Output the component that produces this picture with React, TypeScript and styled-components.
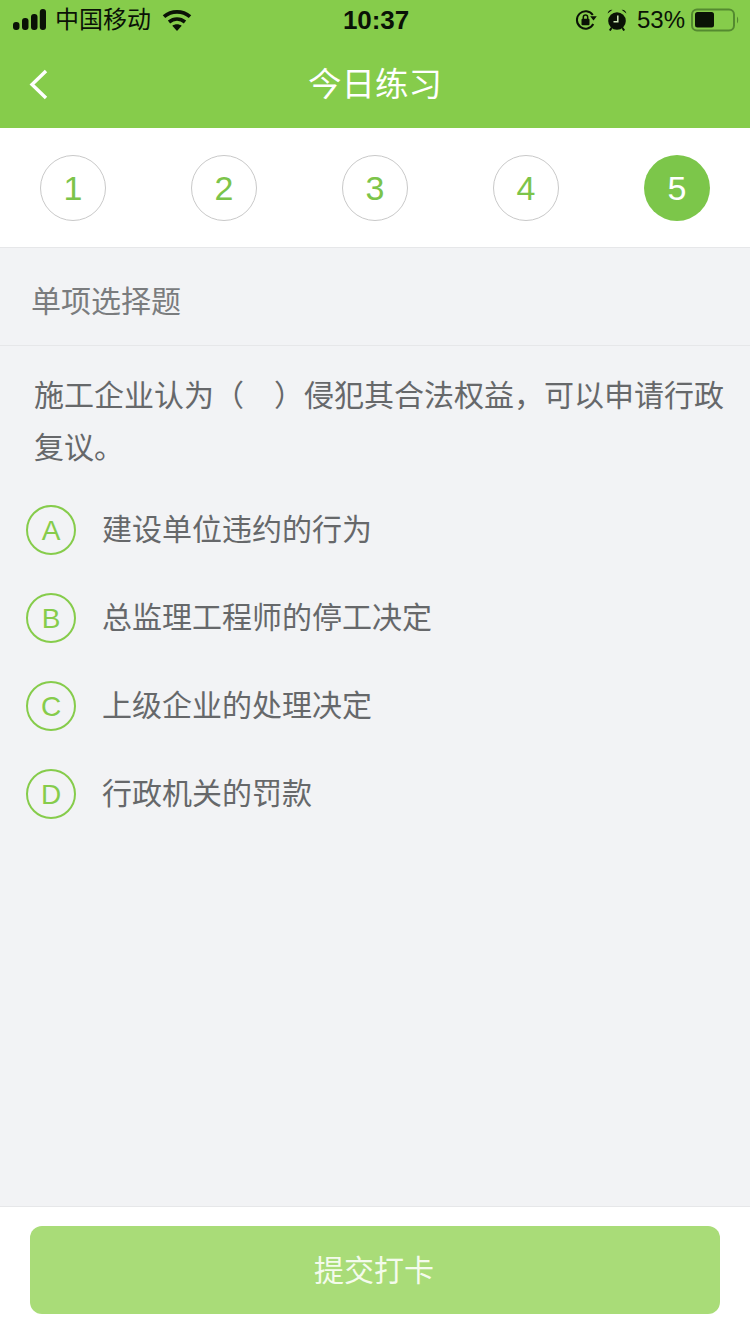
import React from 'react';
import styled, { createGlobalStyle } from 'styled-components';

const Global = createGlobalStyle`
  html, body { margin: 0; padding: 0; background: #f2f3f5; }
  * { box-sizing: border-box; }
`;

const Page = styled.div`
  width: 750px;
  height: 1334px;
  display: flex;
  flex-direction: column;
  overflow: hidden;
  background: #f2f3f5;
  font-family: "Liberation Sans", "Noto Sans CJK SC", sans-serif;
`;
const Header = styled.header`
  background: #86cc4b;
  height: 128px;
  display: flex;
  flex-direction: column;
`;
const StatusBar = styled.div`
  height: 40px;
  display: grid;
  grid-template-columns: 1fr auto 1fr;
  align-items: center;
  padding: 0 11px 0 13px;
  color: #0a1206;
`;
const StatusLeft = styled.div`
  display: flex;
  align-items: center;
  gap: 9px;
  font-size: 24px;
  line-height: 1;
`;
const CarrierName = styled.span`
  margin-right: 2px;
`;
const StatusRight = styled.div`
  display: flex;
  align-items: center;
  justify-content: flex-end;
  font-size: 24px;
`;
const AlarmSlot = styled.span`
  display: flex;
  margin-left: 10px;
`;
const Time = styled.div`
  font-size: 26px;
  font-weight: 700;
  letter-spacing: -0.1px;
`;
const Percent = styled.span`
  margin: 0 6px 0 10px;
`;
const NavBar = styled.div`
  position: relative;
  flex: 1;
  display: flex;
  align-items: center;
  justify-content: center;
`;
const NavTitle = styled.h1`
  margin: 0;
  font-size: 33.5px;
  font-weight: 400;
  color: #fff;
  line-height: 1;
  transform: translateY(1px);
`;
const Back = styled.svg`
  position: absolute;
  left: 28px;
  top: 28px;
`;
const Steps = styled.div`
  background: #fff;
  height: 120px;
  border-bottom: 1px solid #e6e7e9;
  padding: 27px 40px 0;
  display: flex;
  justify-content: space-between;
  align-items: flex-start;
`;
const Step = styled.div<{ $active?: boolean }>`
  width: 66px;
  height: 66px;
  border-radius: 50%;
  display: flex;
  align-items: center;
  justify-content: center;
  font-size: 34px;
  color: ${p => (p.$active ? '#fff' : '#7cc44a')};
  background: ${p => (p.$active ? '#7cc64a' : '#fff')};
  border: ${p => (p.$active ? 'none' : '1px solid #c9c9c9')};
`;
const SectionTitle = styled.div`
  height: 98px;
  border-bottom: 1px solid #e6e7e9;
  padding: 10px 0 0 31px;
  display: flex;
  align-items: center;
  font-size: 30px;
  color: #7a7c7e;
  line-height: 1;
`;
const Body = styled.main`
  flex: 1;
  padding: 24px 26px 0;
  display: flex;
  flex-direction: column;
`;
const Question = styled.p`
  margin: 0 0 12px 8px;
  font-size: 30px;
  line-height: 52px;
  color: #66686a;
  width: 692px;
`;
const Options = styled.ul`
  margin: 0;
  padding: 0;
  list-style: none;
  display: flex;
  flex-direction: column;
`;
const Option = styled.li`
  height: 88px;
  display: flex;
  align-items: center;
  gap: 26px;
`;
const Badge = styled.span`
  width: 50px;
  height: 50px;
  border-radius: 50%;
  border: 2px solid #86cc4b;
  color: #86cc4b;
  display: flex;
  align-items: center;
  justify-content: center;
  font-size: 28px;
  padding-top: 2px;
`;
const OptionText = styled.span`
  font-size: 30px;
  color: #66686a;
  line-height: 1;
`;
const Footer = styled.footer`
  height: 128px;
  background: #fff;
  border-top: 1px solid #e6e7e9;
  padding: 19px 30px 0;
`;
const Submit = styled.button`
  display: block;
  width: 100%;
  height: 88px;
  border: none;
  border-radius: 12px;
  background: #a9dc78;
  color: #f4fbec;
  font-family: inherit;
  font-size: 30px;
  padding: 0 2px 5px 0;
`;

const Signal = () => (
  <svg width="33" height="22" viewBox="0 0 33 22" fill="#0a1206">
    <rect x="0" y="13" width="6.500" height="8" rx="3" />
    <rect x="9" y="9" width="6.500" height="12" rx="3" />
    <rect x="18" y="5" width="6.500" height="16" rx="3" />
    <rect x="26.800" y="0" width="6.200" height="21" rx="3" />
  </svg>
);
const Wifi = () => (
  <svg width="30" height="22" viewBox="0 0 30 22" fill="none">
    <path d="M2 7.600C9.500 1.200 20.500 1.200 28 7.600" stroke="#0a1206" strokeWidth="3.800" />
    <path d="M7 13C11.800 9 18.200 9 23 13" stroke="#0a1206" strokeWidth="3.600" />
    <path d="M10.300 16.800C13 14.800 17 14.800 19.700 16.800L15 22z" fill="#0a1206" />
  </svg>
);
const RotationLock = () => (
  <svg width="22" height="22" viewBox="0 0 22 22" fill="none">
    <path d="M18.300 15A8.700 8.700 0 1 1 17.800 6" stroke="#0a1206" strokeWidth="2" />
    <path d="M15.200 7.200h6.600l-3.300 4.200z" fill="#0a1206" />
    <rect x="6.500" y="9.800" width="8" height="6.400" rx="1" fill="#0a1206" />
    <path d="M8.300 10V8.200a2.200 2.200 0 0 1 4.400 0V10" stroke="#0a1206" strokeWidth="1.500" />
  </svg>
);
const Alarm = () => (
  <svg width="20" height="22" viewBox="0 0 20 22" fill="none">
    <circle cx="10" cy="12" r="8.800" fill="#0a1206" />
    <path d="M.6 4.600C1 2.200 3 .6 5.400 .8zM19.400 4.600C19 2.200 17 .6 14.600 .8z" fill="#0a1206" />
    <path d="M4.500 19 2.800 21.500M15.500 19l1.700 2.500" stroke="#0a1206" strokeWidth="2" />
    <path d="M10.800 6.500v6.300H6.500" stroke="#cfe8b8" strokeWidth="1.500" />
  </svg>
);
const Battery = () => (
  <svg width="48" height="24" viewBox="0 0 48 24" fill="none">
    <rect x="1" y="1.500" width="42" height="21" rx="5" stroke="#548a30" strokeWidth="2" />
    <rect x="4" y="4" width="19" height="15.500" rx="2.500" fill="#0a1206" />
    <path d="M46 8.500c.9.800 1.200 2 1.200 3.500s-.3 2.700-1.200 3.500z" fill="#548a30" />
  </svg>
);

const OPTIONS: [string, string][] = [
  ['A', '建设单位违约的行为'],
  ['B', '总监理工程师的停工决定'],
  ['C', '上级企业的处理决定'],
  ['D', '行政机关的罚款'],
];

export default function App() {
  return (
    <Page>
      <Global />
      <Header>
        <StatusBar>
          <StatusLeft>
            <Signal />
            <CarrierName>中国移动</CarrierName>
            <Wifi />
          </StatusLeft>
          <Time>10:37</Time>
          <StatusRight>
            <RotationLock />
            <AlarmSlot><Alarm /></AlarmSlot>
            <Percent>53%</Percent>
            <Battery />
          </StatusRight>
        </StatusBar>
        <NavBar>
          <Back width="22" height="34" viewBox="0 0 22 34" fill="none">
            <path d="M18 3 4 16.500 18 30" stroke="#fff" strokeWidth="3.400" />
          </Back>
          <NavTitle>今日练习</NavTitle>
        </NavBar>
      </Header>
      <Steps>
        {[1, 2, 3, 4, 5].map(n => (
          <Step key={n} $active={n === 5}>{n}</Step>
        ))}
      </Steps>
      <SectionTitle>单项选择题</SectionTitle>
      <Body>
        <Question>施工企业认为（　）侵犯其合法权益，可以申请行政复议。</Question>
        <Options>
          {OPTIONS.map(([k, t]) => (
            <Option key={k}>
              <Badge>{k}</Badge>
              <OptionText>{t}</OptionText>
            </Option>
          ))}
        </Options>
      </Body>
      <Footer>
        <Submit>提交打卡</Submit>
      </Footer>
    </Page>
  );
}
